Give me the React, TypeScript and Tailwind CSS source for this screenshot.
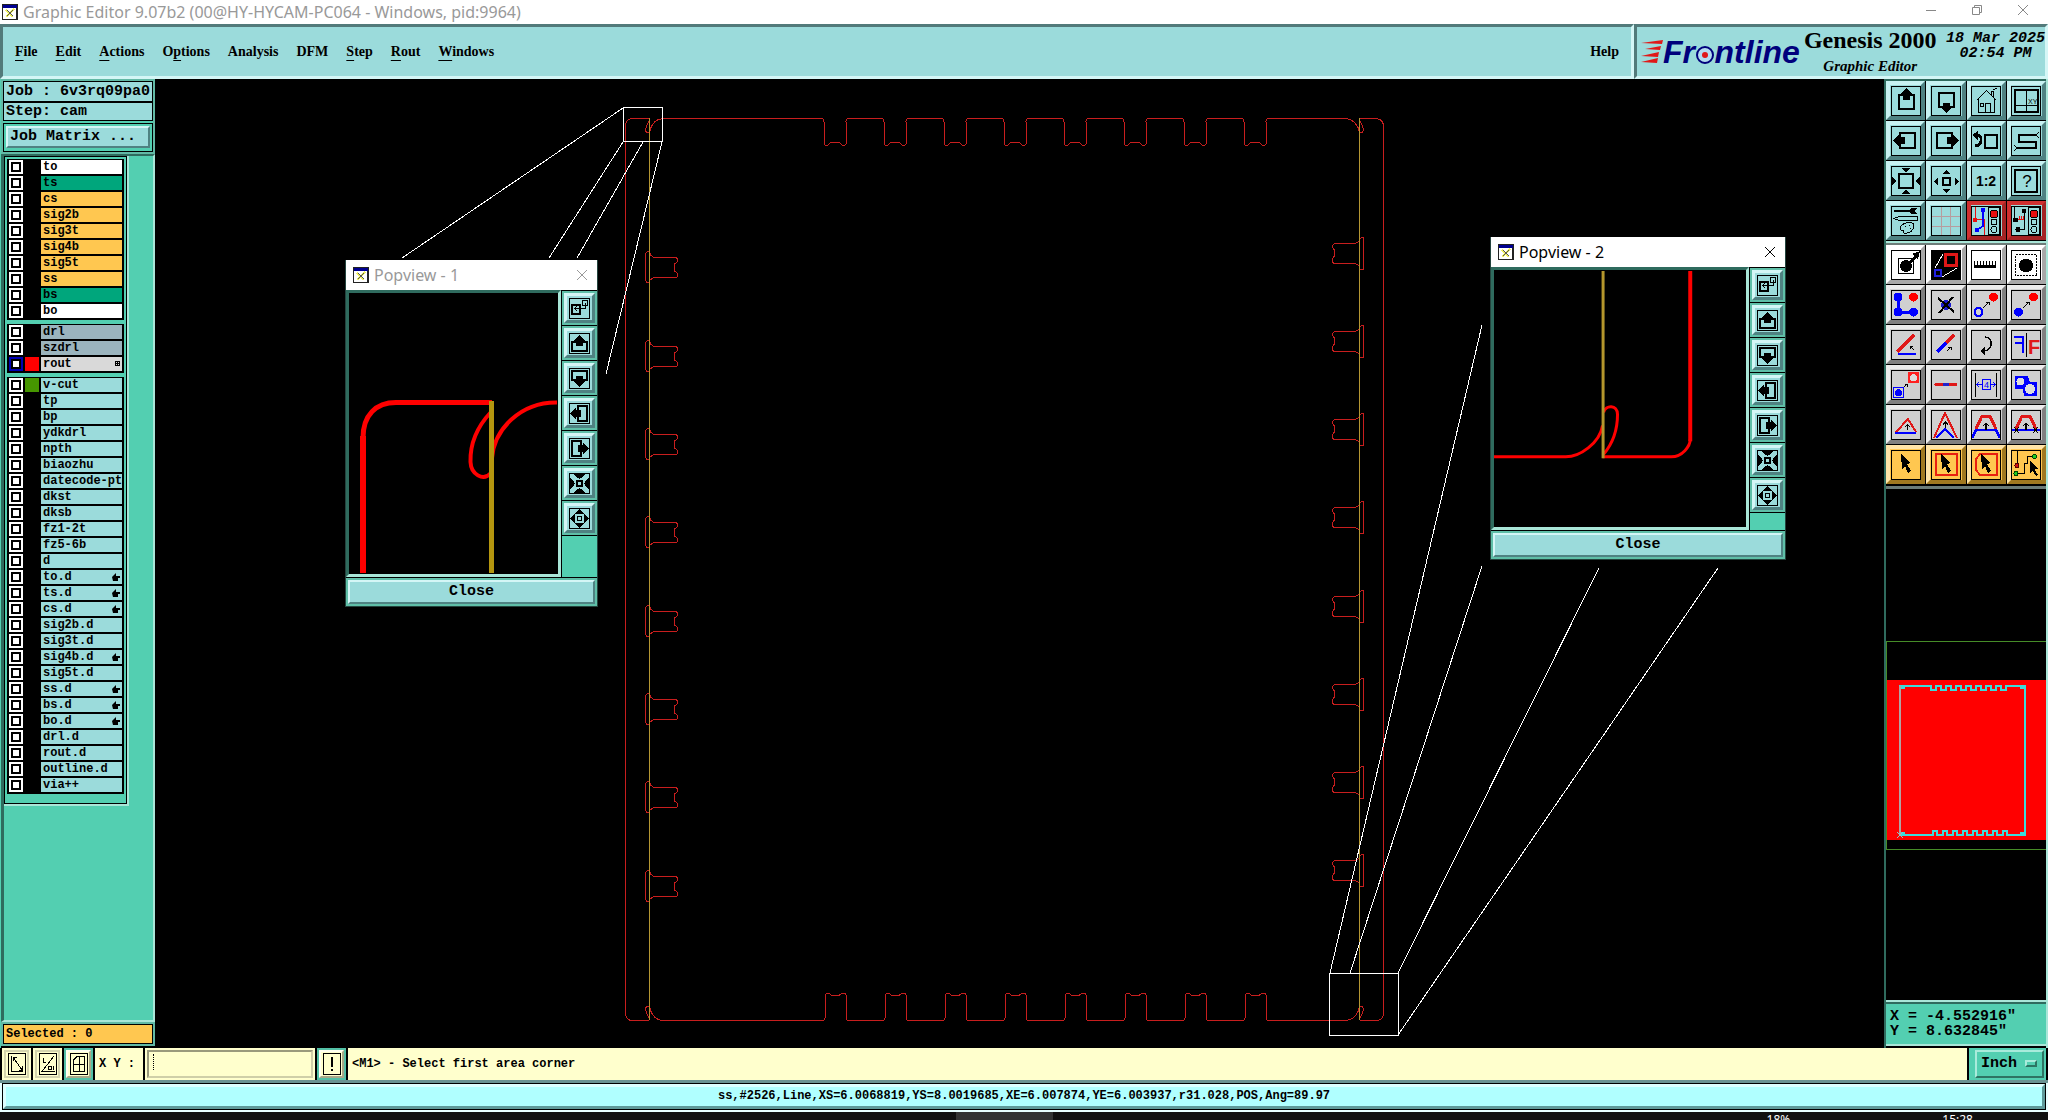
import type { ReactNode } from 'react'
import { clsx } from 'clsx'

const mono = "font-['Liberation_Mono',monospace] font-bold"
const serif = "font-['Liberation_Serif',serif] font-bold"
const raisedAqua = 'border-t-[#d4f6f6] border-l-[#d4f6f6] border-b-[#4f8282] border-r-[#4f8282]'
const sunkenAqua = 'border-t-[#527a7a] border-l-[#527a7a] border-b-[#d4f6f6] border-r-[#d4f6f6]'
const raisedTeal = 'border-t-[#a9ebdb] border-l-[#a9ebdb] border-b-[#2d7463] border-r-[#2d7463]'
const sunkenTeal = 'border-t-[#2f6b5e] border-l-[#2f6b5e] border-b-[#a9e6d8] border-r-[#a9e6d8]'

const menus = [
    { label: 'File', key: 0 },
    { label: 'Edit', key: 0 },
    { label: 'Actions', key: 0 },
    { label: 'Options', key: 1 },
    { label: 'Analysis', key: -1 },
    { label: 'DFM', key: -1 },
    { label: 'Step', key: 0 },
    { label: 'Rout', key: 0 },
    { label: 'Windows', key: 0 },
]

interface Layer {
    name: string
    bg: string
    swatch?: string
    active?: boolean
    hand?: boolean
}

const plain = (name: string, hand = false): Layer => ({ name, hand, bg: 'bg-[#9bdbdb]' })
const signal = (name: string): Layer => ({ name, bg: 'bg-[#ffc750]' })

const layerGroups: Layer[][] = [
    [
        { name: 'to', bg: 'bg-white' },
        { name: 'ts', bg: 'bg-[#00a67c]' },
        signal('cs'),
        signal('sig2b'),
        signal('sig3t'),
        signal('sig4b'),
        signal('sig5t'),
        signal('ss'),
        { name: 'bs', bg: 'bg-[#00a67c]' },
        { name: 'bo', bg: 'bg-white' },
    ],
    [
        { name: 'drl', bg: 'bg-[#9bb4be]' },
        { name: 'szdrl', bg: 'bg-[#9bb4be]' },
        { name: 'rout', bg: 'bg-[#d9d9d9]', swatch: 'bg-[#ff0000]', active: true },
    ],
    [
        { name: 'v-cut', bg: 'bg-[#9bdbdb]', swatch: 'bg-[#469600]' },
        plain('tp'),
        plain('bp'),
        plain('ydkdrl'),
        plain('npth'),
        plain('biaozhu'),
        plain('datecode-ptc'),
        plain('dkst'),
        plain('dksb'),
        plain('fz1-2t'),
        plain('fz5-6b'),
        plain('d'),
        plain('to.d', true),
        plain('ts.d', true),
        plain('cs.d', true),
        plain('sig2b.d'),
        plain('sig3t.d'),
        plain('sig4b.d', true),
        plain('sig5t.d'),
        plain('ss.d', true),
        plain('bs.d', true),
        plain('bo.d', true),
        plain('drl.d'),
        plain('rout.d'),
        plain('outline.d'),
        plain('via++'),
    ],
]

/* ---------- toolbar icons, on a 30x30 grid ---------- */

const cursor = <path d="M10 4 L20 13 L16 14 L20 21 L17 23 L14 16 L11 19 Z" fill="#000" />
const tinyUp = <path d="M15 20 V13 M12 16 L15 13 L18 16" fill="none" stroke="#000" strokeWidth="1.3" />
const trafficLight = (
    <>
        <rect x="17.500" y="1.500" width="11" height="27" fill="none" stroke="#000" />
        <circle cx="23" cy="8" r="4" fill="#e81010" stroke="#000" />
        <circle cx="23" cy="16" r="3" fill="none" stroke="#000" />
        <circle cx="23" cy="23.500" r="3" fill="none" stroke="#000" />
    </>
)

const icons: Record<string, ReactNode> = {
    up: (
        <>
            <rect x="8" y="9" width="15" height="14" fill="none" stroke="#000" strokeWidth="2" />
            <path d="M15.500 2 L21 8 H19 V14 H12 V8 H10 Z" />
        </>
    ),
    down: (
        <>
            <rect x="8" y="7" width="15" height="14" fill="none" stroke="#000" strokeWidth="2" />
            <path d="M12 17 H19 V22 H21 L15.500 27 L10 22 H12 Z" />
        </>
    ),
    home: (
        <path
            d="M5.500 14.500 L15.500 4.500 L25.500 14.500 M7.500 13 V26.500 H23.500 V13 M14.500 26 V17.500 H19.500 V26 M9.500 17.500 H12.500 V20.500 H9.500 Z M20.500 9 V5.500 H22.500 V11 M22 4 L26 2"
            fill="none" stroke="#000"
        />
    ),
    layout: (
        <>
            <path d="M4 4 H27 V26 H4 Z" fill="none" stroke="#000" strokeWidth="2" />
            <path d="M15.500 4 V26 M3 19.500 H27" stroke="#000" />
            <text x="17" y="18" fontSize="7" fontFamily="Liberation Sans">XY</text>
        </>
    ),
    left: (
        <>
            <rect x="9" y="7" width="15" height="15" fill="none" stroke="#000" strokeWidth="2" />
            <path d="M2 14.500 L8 9 V11 H14 V18 H8 V20 Z" />
        </>
    ),
    right: (
        <>
            <rect x="6" y="7" width="15" height="15" fill="none" stroke="#000" strokeWidth="2" />
            <path d="M28 14.500 L22 9 V11 H16 V18 H22 V20 Z" />
        </>
    ),
    undo: (
        <>
            <path d="M5 10 Q11 8 10 15 Q9 20 4 20" fill="none" stroke="#000" strokeWidth="3" />
            <path d="M1 9 L7 5 V14 Z" />
            <rect x="14" y="9" width="12" height="13" fill="none" stroke="#000" strokeWidth="2" />
        </>
    ),
    serp: (
        <>
            <path d="M25 9 H8 V16 H25 V22 H6" fill="none" stroke="#000" strokeWidth="2" />
            <path d="M28 6 L25 9 L28 12 M3 19 L6 22 L3 25" fill="none" stroke="#000" />
        </>
    ),
    zoomIn: (
        <>
            <rect x="8" y="8" width="14" height="14" fill="none" stroke="#000" strokeWidth="2" />
            <path d="M10 2 H20 L15 6 Z M10 28 H20 L15 24 Z M1 10 V20 L5 15 Z M29 10 V20 L25 15 Z" />
        </>
    ),
    zoomOut: (
        <>
            <rect x="12" y="12" width="7" height="7" fill="none" stroke="#000" strokeWidth="2" />
            <path d="M15.500 4 L20 8 H11 Z M15.500 27 L20 23 H11 Z M3 15.500 L7 11 V20 Z M28 15.500 L24 11 V20 Z" />
        </>
    ),
    ratio: <text x="15" y="20" textAnchor="middle" fontSize="14" fontWeight="700" fontFamily="Liberation Sans">1:2</text>,
    help: (
        <>
            <path d="M4 4 H26 V26 H4 Z" fill="none" stroke="#000" strokeWidth="2" />
            <text x="16" y="21" textAnchor="middle" fontSize="17" fontFamily="Liberation Sans">?</text>
        </>
    ),
    tools: (
        <>
            <path d="M3 4 H18 L21 2 H27 L23 5 L27 8 H21 L18 6 H3 Z" />
            <path d="M3 12.500 L8 10.500 H26 V14.500 H8 Z" fill="none" stroke="#000" />
            <path d="M10 24 Q8 19 15 17 Q23 15 23 20 Q22 26 16 27 Q10 28 13 24 Z" fill="none" stroke="#000" />
            <path d="M14 20 h1 M18 19 h1 M19 22 h1" stroke="#000" />
        </>
    ),
    grid: <path d="M10.500 1 V29 M19.500 1 V29 M1 10.500 H29 M1 20.500 H29" stroke="#b79c9e" />,
    netA: (
        <>
            <path d="M4.500 1 V13.500 H13.500 V29" fill="none" stroke="#e81010" />
            <path d="M12 4 V20 L6 24" fill="none" stroke="#00f" strokeWidth="1.500" />
            <circle cx="12" cy="4" r="2.500" fill="#00f" />
            <circle cx="6" cy="24" r="2.500" fill="#00f" />
            <circle cx="4" cy="14" r="2.500" fill="#e81010" />
            {trafficLight}
        </>
    ),
    netB: (
        <>
            <path d="M3.500 1 V14 M13.500 4 V23.500 H8" fill="none" stroke="#000" />
            <path d="M6 13.500 H13 M8.500 10 V14 M10.500 10 V14 M12.500 10 V14" stroke="#e81010" />
            <circle cx="13" cy="5" r="2.500" />
            <circle cx="4.500" cy="14" r="2.500" />
            <circle cx="7" cy="23.500" r="2.500" />
            {trafficLight}
        </>
    ),
    padMove: (
        <>
            <rect x="7.500" y="8.500" width="15" height="15" fill="none" stroke="#000" />
            <circle cx="15" cy="16" r="6" />
            <path d="M17 12 L23 6 L21 4 L29 1 L27 9 L25 8 L19 14 Z" />
        </>
    ),
    copyArea: (
        <>
            <rect width="30" height="30" fill="#000" />
            <rect x="14" y="4" width="11" height="11" fill="none" stroke="#e01818" strokeWidth="3" />
            <rect x="4" y="20" width="6" height="6" fill="none" stroke="#2222e0" strokeWidth="2" />
            <path d="M12 4 L4 18 M26 18 L11 27" stroke="#fff" />
        </>
    ),
    ruler: <path d="M3 11 h1 v4 h2 v-4 h1 v4 h2 v-4 h1 v4 h2 v-4 h1 v4 h2 v-4 h1 v4 h2 v-4 h1 v4 h2 v-4 h1 v4 h2 v-4 h1 v7 H3 Z" />,
    selectPad: (
        <>
            <rect x="4.500" y="4.500" width="21" height="21" fill="none" stroke="#000" strokeDasharray="2 1" />
            <circle cx="15" cy="15.500" r="7" />
        </>
    ),
    chain: (
        <>
            <path d="M7 7 V22 H23" fill="none" stroke="#00f" strokeWidth="3" />
            <g fill="#00f">
                <circle cx="7" cy="7" r="4.500" />
                <circle cx="7" cy="22" r="4.500" />
                <circle cx="22.500" cy="22" r="4.500" />
            </g>
            <circle cx="22.500" cy="7" r="4.500" fill="#f00" />
        </>
    ),
    remove: (
        <>
            <circle cx="15" cy="15" r="5" fill="#1a1ad0" />
            <path d="M7 8 L23 22 M22 7 L8 23" stroke="#000" strokeWidth="2" />
        </>
    ),
    copyPad: (
        <>
            <circle cx="22.500" cy="7" r="4.500" fill="#f00" />
            <circle cx="7.500" cy="22" r="4" fill="none" stroke="#00f" strokeWidth="2" />
            <path d="M12 18 L18 12 M15 12 H18 V15" fill="none" stroke="#000" />
        </>
    ),
    movePad: (
        <>
            <circle cx="22.500" cy="7" r="4.500" fill="#f00" />
            <circle cx="7.500" cy="22" r="4.500" fill="#00f" />
            <path d="M12 18 L18 12 M15 12 H18 V15" fill="none" stroke="#000" />
        </>
    ),
    rotate: (
        <>
            <path d="M6 22 L23 5" stroke="#e01818" strokeWidth="3" />
            <path d="M7 24 H25" stroke="#00f" strokeWidth="2" />
            <path d="M23 20 L19 16 M19 19 V16 H22" fill="none" stroke="#000" />
        </>
    ),
    extend: (
        <>
            <path d="M15 13 L23 5" stroke="#e01818" strokeWidth="3" />
            <path d="M6 22 L15 13" stroke="#00f" strokeWidth="3" />
            <path d="M16 21 L20 17 M17 17 H20 V20" fill="none" stroke="#000" />
        </>
    ),
    turn: (
        <>
            <path d="M14 7 Q21 8 20 15 Q19 21 12 21" fill="none" stroke="#000" strokeWidth="1.500" />
            <path d="M9 21 L14 17 V25 Z" />
        </>
    ),
    mirror: (
        <>
            <path d="M15.500 3 V27" stroke="#000" />
            <path d="M3 7 H12 V23 M4 13 H12" fill="none" stroke="#00f" strokeWidth="2" />
            <text x="17" y="24" fontSize="20" fontWeight="700" fontFamily="Liberation Sans" fill="#e01818">F</text>
        </>
    ),
    swap: (
        <>
            <rect x="17" y="2" width="11" height="11" fill="#f22" />
            <circle cx="22.500" cy="7.500" r="3.500" fill="#ddd" />
            <rect x="2.500" y="17.500" width="10" height="10" fill="none" stroke="#00f" />
            <circle cx="7.500" cy="22.500" r="3.500" fill="#00f" />
            <path d="M13 17 L16 14 M13.500 14.500 H16 V17" fill="none" stroke="#000" />
        </>
    ),
    bridge: (
        <>
            <path d="M5 14.500 H25" stroke="#e01818" strokeWidth="3" strokeLinecap="round" />
            <path d="M12 14.500 H18" stroke="#22c" strokeWidth="3" />
        </>
    ),
    spacing: (
        <>
            <path d="M4.500 3 V27 M25.500 3 V27" stroke="#000" />
            <rect x="11.500" y="9.500" width="8" height="10" fill="none" stroke="#00f" />
            <path d="M11 14.500 H6 M8 12 L5.500 14.500 L8 17 M20 14.500 H24 M22 12 L24.500 14.500 L22 17" fill="none" stroke="#00f" />
            <text x="15.500" y="18" textAnchor="middle" fontSize="9" fontFamily="Liberation Sans" fill="#00f">4</text>
        </>
    ),
    merge: (
        <>
            <path d="M4 6 H17 L19 12 H26 V26 H13 L12 19 H4 Z" fill="#00f" />
            <circle cx="9.500" cy="11.500" r="4" fill="#ddd" />
            <circle cx="19" cy="19" r="5" fill="#ddd" />
        </>
    ),
    triangle: (
        <>
            <path d="M5 22 L17 9 L25 22" fill="none" stroke="#e01818" strokeWidth="2" />
            <path d="M4 23 H25" stroke="#00f" strokeWidth="2" />
            <path d="M16.500 20 V15 M14 17 L16.500 14.500 L19 17" fill="none" stroke="#000" />
        </>
    ),
    peak: (
        <>
            <path d="M3 28 L14 3 L26 28" fill="none" stroke="#e01818" strokeWidth="2" />
            <path d="M5 28 L14 19 L23 28" fill="none" stroke="#00f" strokeWidth="2" />
            <path d="M14.500 18 V12 M12 14.500 L14.500 12 L17 14.500" fill="none" stroke="#000" />
        </>
    ),
    trapezoid: (
        <>
            <path d="M5 19 L11 6 H19 L25 19" fill="none" stroke="#e01818" strokeWidth="3" />
            <path d="M1 28 L5 20 H25 L29 28" fill="none" stroke="#00f" strokeWidth="2.500" />
            {tinyUp}
        </>
    ),
    trapezoidCut: (
        <>
            <path d="M5 19 L11 6 H19 L25 19" fill="none" stroke="#e01818" strokeWidth="3" />
            <path d="M1 20 H29" stroke="#00f" strokeWidth="2" />
            <path d="M3 17 L8 23 M8 17 L3 23 M22 17 L27 23 M27 17 L22 23" stroke="#000" />
            {tinyUp}
        </>
    ),
    pick: cursor,
    pickRect: (
        <>
            <rect x="5" y="4" width="21" height="21" fill="none" stroke="#e82010" strokeWidth="2" />
            {cursor}
        </>
    ),
    pickPoly: (
        <>
            <path d="M9 4 H26 V25 H9 L5 20 V9 Z" fill="none" stroke="#e82010" strokeWidth="2" />
            {cursor}
        </>
    ),
    pickNet: (
        <>
            <path d="M6.500 1 V15 M7 23.500 H13.500 V13.500 H16.500 V6.500 H22" fill="none" stroke="#000" />
            <circle cx="6" cy="15.500" r="2" fill="#d01010" stroke="#500" />
            <circle cx="23.500" cy="6.500" r="2" fill="#2c2" stroke="#040" />
            <circle cx="5" cy="23.500" r="2" fill="#2c2" stroke="#040" />
            <path d="M19 11 L27 19 L23.500 19.500 L27 25 L25 26 L22 21 L19 23 Z" />
        </>
    ),
}

function Icon({ name }: { name: string }) {
    return (
        <svg viewBox="1 1 28 28" className="block size-7" shapeRendering="crispEdges" aria-hidden="true">
            {icons[name]}
        </svg>
    )
}

/* smaller set for the popview side bar, on a 21x21 grid */
const popIcons: Record<string, ReactNode> = {
    link: (
        <>
            <rect x="3" y="7" width="8" height="9" fill="none" stroke="#000" strokeWidth="2" />
            <rect x="13.500" y="2.500" width="5" height="5" fill="none" stroke="#000" />
            <path d="M16.500 5 V10.500 H5 M8 8 L5.500 10.500 L8 13" fill="none" stroke="#000" />
        </>
    ),
    up: (
        <>
            <rect x="3" y="9" width="15" height="9" fill="none" stroke="#000" strokeWidth="2" />
            <path d="M10.500 2 L16 8 H14 V13 H7 V8 H5 Z" />
        </>
    ),
    down: (
        <>
            <rect x="3" y="3" width="15" height="9" fill="none" stroke="#000" strokeWidth="2" />
            <path d="M10.500 19 L16 13 H14 V8 H7 V13 H5 Z" />
        </>
    ),
    left: (
        <>
            <rect x="9" y="3" width="9" height="15" fill="none" stroke="#000" strokeWidth="2" />
            <path d="M1 10.500 L7 5 V7 H12 V14 H7 V16 Z" />
        </>
    ),
    right: (
        <>
            <rect x="3" y="3" width="9" height="15" fill="none" stroke="#000" strokeWidth="2" />
            <path d="M20 10.500 L14 5 V7 H9 V14 H14 V16 Z" />
        </>
    ),
    shrink: (
        <>
            <rect x="8" y="8" width="5" height="5" fill="none" stroke="#000" strokeWidth="2" />
            <path d="M5 0 H16 V2 L10.500 6 L5 2 Z M5 21 H16 V19 L10.500 15 L5 19 Z M0 5 V16 H2 L6 10.500 L2 5 Z M21 5 V16 H19 L15 10.500 L19 5 Z" />
        </>
    ),
    grow: (
        <>
            <rect x="8.500" y="8.500" width="4" height="4" fill="none" stroke="#000" />
            <path d="M10.500 1 L15 6 H6 Z M10.500 20 L15 15 H6 Z M1 10.500 L6 6 V15 Z M20 10.500 L15 6 V15 Z" />
        </>
    ),
}

const viewTools = [
    'up', 'down', 'home', 'layout',
    'left', 'right', 'undo', 'serp',
    'zoomIn', 'zoomOut', 'ratio', 'help',
    'tools', 'grid', 'netA', 'netB',
]

const editTools = [
    'padMove', 'copyArea', 'ruler', 'selectPad',
    'chain', 'remove', 'copyPad', 'movePad',
    'rotate', 'extend', 'turn', 'mirror',
    'swap', 'bridge', 'spacing', 'merge',
    'triangle', 'peak', 'trapezoid', 'trapezoidCut',
    'pick', 'pickRect', 'pickPoly', 'pickNet',
]

const tones = {
    aqua: 'bg-[#9bdbdb] border-t-[#c8f2f2] border-l-[#c8f2f2] border-b-[#4f8282] border-r-[#4f8282]',
    red: 'bg-[#9bdbdb] border-t-[#d03030] border-l-[#d03030] border-b-[#a42424] border-r-[#a42424]',
    white: 'bg-white border-t-white border-l-white border-b-[#a8a8a8] border-r-[#a8a8a8]',
    gray: 'bg-[#d0d0d0] border-t-[#ececec] border-l-[#ececec] border-b-[#808080] border-r-[#808080]',
    orange: 'bg-[#ffc750] border-t-[#ffe4a8] border-l-[#ffe4a8] border-b-[#a07820] border-r-[#a07820]',
}

function ToolButton({ name, tone }: { name: string; tone: keyof typeof tones }) {
    return (
        <button type="button" aria-label={name} className={clsx('flex h-[39px] items-center justify-center border-4', tones[tone])}>
            <span className="border border-black">
                <Icon name={name} />
            </span>
        </button>
    )
}

function AppIcon() {
    return (
        <svg viewBox="0 0 16 16" className="size-4 shrink-0" shapeRendering="crispEdges" aria-hidden="true">
            <rect width="16" height="16" fill="#222" />
            <rect x="1" y="1" width="14" height="3" fill="#000090" />
            <rect x="1" y="4" width="13" height="11" fill="#fff" />
            <path d="M4 6 L11 13 M12 5 L4 13" stroke="#f0f060" strokeWidth="2" />
            <path d="M5 6 L11 12 M11 6 L5 12" stroke="#555" />
        </svg>
    )
}

function TitleBar() {
    return (
        <header className="flex h-6 shrink-0 items-center gap-[5px] bg-white pl-[2px] font-['Noto_Sans',sans-serif] text-base text-[#999]">
            <AppIcon />
            <h1 className="leading-5 whitespace-nowrap">Graphic Editor 9.07b2 (00@HY-HYCAM-PC064 - Windows, pid:9964)</h1>
            <div className="ml-auto flex gap-9 pr-5 pb-1">
                <button type="button" aria-label="Minimize">
                    <svg viewBox="0 0 10 10" className="size-[10px]"><path d="M0 5.500 H10" stroke="#888" /></svg>
                </button>
                <button type="button" aria-label="Restore">
                    <svg viewBox="0 0 10 10" className="size-[10px]">
                        <path d="M0.500 2.500 H7.500 V9.500 H0.500 Z M2.500 2 V0.500 H9.500 V7.500 H8" fill="none" stroke="#888" />
                    </svg>
                </button>
                <button type="button" aria-label="Close window">
                    <svg viewBox="0 0 10 10" className="size-[10px]"><path d="M0 0 L10 10 M10 0 L0 10" stroke="#888" /></svg>
                </button>
            </div>
        </header>
    )
}

function MenuLabel({ label, hotkey }: { label: string; hotkey: number }) {
    if (hotkey < 0) return <>{label}</>
    return (
        <>
            {label.slice(0, hotkey)}
            <span className="underline underline-offset-4">{label[hotkey]}</span>
            {label.slice(hotkey + 1)}
        </>
    )
}

function Logo() {
    return (
        <div className="flex items-center">
            <svg viewBox="0 0 22 24" className="h-6 w-[22px]" aria-hidden="true">
                <path d="M0 3 L22 0 L21 4 Z M4 9 L20 6 L19 10 Z M0 16 L18 12 L17 17 Z M0 22 L17 18 L16 23 Z" fill="#e01818" />
            </svg>
            <span className="font-['Liberation_Sans',sans-serif] text-[32px] leading-8 font-bold text-[#00007c] italic">
                Fr
                <span className="relative text-transparent">
                    o
                    <svg viewBox="0 0 18 18" className="absolute bottom-[6px] left-px size-[18px]" aria-hidden="true">
                        <circle cx="9" cy="9" r="8" fill="#b4dcf0" stroke="#00007c" strokeWidth="2" />
                        <circle cx="9" cy="9" r="3" fill="#e01818" />
                    </svg>
                </span>
                ntline
            </span>
        </div>
    )
}

function MenuBar() {
    return (
        <div className="flex h-[55px] shrink-0 bg-[#9bdbdb]">
            <nav className={clsx('flex flex-1 items-center gap-[18px] border-3 px-3 text-sm', sunkenAqua, serif)}>
                {menus.map((m) => (
                    <button key={m.label} type="button">
                        <MenuLabel label={m.label} hotkey={m.key} />
                    </button>
                ))}
                <button type="button" className="ml-auto">Help</button>
            </nav>
            <div className={clsx('flex w-[414px] gap-1 border-3 pl-1', sunkenAqua)}>
                <Logo />
                <div className={clsx('text-center whitespace-nowrap', serif)}>
                    <div className="text-[24px] leading-[26px]">Genesis 2000</div>
                    <div className="text-[15px] leading-[26px] italic">Graphic Editor</div>
                </div>
                <div className={clsx('ml-auto pt-1 text-center text-[15px] leading-[15px] whitespace-nowrap italic', mono)}>
                    <div>18 Mar 2025</div>
                    <div>02:54 PM</div>
                </div>
            </div>
        </div>
    )
}

function LayerRow({ layer }: { layer: Layer }) {
    return (
        <label className="flex h-4 items-center gap-[2px]">
            <span className={clsx('flex size-[14px] shrink-0 items-center justify-center', layer.active ? 'bg-[#0000b4]' : 'bg-white')}>
                <input
                    type="checkbox"
                    defaultChecked={layer.active}
                    className="size-[10px] appearance-none border-2 border-black bg-white"
                />
            </span>
            <span className={clsx('size-[14px] shrink-0', layer.swatch)} />
            <span className={clsx('flex h-[14px] w-[82px] items-center overflow-hidden pl-[2px] text-[12px] leading-[14px] whitespace-nowrap', layer.bg)}>
                {layer.name}
                {layer.hand && (
                    <svg viewBox="0 0 8 8" className="mr-[2px] ml-auto size-2" aria-hidden="true">
                        <path d="M0 4 L4 0 V3 H8 V5 H6 V8 H1 Z" />
                    </svg>
                )}
                {layer.active && (
                    <svg viewBox="0 0 5 5" className="mr-[2px] ml-auto size-[5px]" shapeRendering="crispEdges" aria-hidden="true">
                        <path d="M0.500 0.500 H4.500 V4.500 H0.500 Z M2.500 0 V5 M0 2.500 H5" fill="none" stroke="#000" />
                    </svg>
                )}
            </span>
        </label>
    )
}

function LayerPanel() {
    return (
        <aside className={clsx('flex w-[155px] shrink-0 flex-col bg-[#53cfb1] pl-px', mono)}>
            <div className="border-2 border-[#62b9a5] text-[15px]">
                <div className="border border-black bg-[#9bdbdb] px-[2px] pt-px leading-[18px] whitespace-nowrap">Job : 6v3rq09pa0</div>
                <div className="border border-black bg-[#9bdbdb] px-[2px] leading-[17px]">Step: cam</div>
                <div className="mt-[2px] border border-black p-[2px]">
                    <button type="button" className={clsx('h-[22px] w-full border-2 bg-[#9bdbdb] pl-[2px] text-left leading-[18px]', raisedAqua)}>
                        Job Matrix ...
                    </button>
                </div>
            </div>
            <div className={clsx('flex-1 border-2 border-l-3', sunkenTeal)}>
                <div className="w-[125px] border-r-2 border-b-2 border-[#a9e6d8]">
                    <div className="flex flex-col gap-1 border border-black px-[2px] pt-[2px] pb-[9px]">
                        {layerGroups.map((group, i) => (
                            <div key={i} className="bg-black px-[2px] pb-px">
                                {group.map((layer) => (
                                    <LayerRow key={layer.name} layer={layer} />
                                ))}
                            </div>
                        ))}
                    </div>
                </div>
            </div>
            <div className="border-2 border-[#62b9a5]">
                <div className="border border-black bg-[#ffc750] pl-[2px] text-[12px] leading-[18px]">Selected : 0</div>
            </div>
            <div className="h-[2px] bg-black" />
        </aside>
    )
}

/* ---------- board drawing ---------- */

const notchXs = [825, 885, 945, 1005, 1065, 1125, 1185, 1245]
const leftTabs = [267, 356, 444, 532, 621, 709, 797, 886]
const rightTabs = [253, 341, 429, 517, 606, 694, 782, 870]

const topEdge = notchXs
    .map((x) => `H${x - 3} q2 0 2 3 V144 q2 3 5 0 q1 -2 4 -2 h4 q3 0 4 2 q3 3 5 0 V121.500 q0 -3 3 -3`)
    .join(' ')

const bottomEdge = notchXs
    .map((x) => `H${x - 3} q3 0 3 -3 V995 q2 -3 5 -1 q2 2 4 1 h3 q2 1 4 -1 q4 -2 5 1 V1017.500 q0 3 3 3`)
    .join(' ')

function Board() {
    return (
        <svg viewBox="155 79 1729 969" className="absolute inset-0 size-full" preserveAspectRatio="xMinYMin meet" shapeRendering="crispEdges" aria-hidden="true">
            <g fill="none" stroke="#c81e1e" strokeWidth="1">
                <path d="M649.500 118.500 H632 Q625.500 119 625.500 127 V1012 Q625.500 1020.500 632 1020.500 H649" />
                <path d="M1360 118.500 H1376 Q1383.500 119 1383.500 127 V1012 Q1383.500 1020.500 1376 1020.500 H1360" />
                <path d="M650 131 Q653 119 663 118.500" />
                <path d={`M663 118.500 ${topEdge} H1345 Q1356 119 1359 131`} />
                <path d={`M650 1008 Q653 1020 663 1020.500 ${bottomEdge} H1345 Q1356 1020 1359 1008`} />
                <path d="M649 121 Q643 132 648 133 Q651 132 650 127" />
                <path d="M649 1018 Q643 1007 648 1006 Q651 1007 650 1012" />
                <path d="M1360 121 Q1366 132 1361 133 Q1358 132 1359 127" />
                <path d="M1360 1018 Q1366 1007 1361 1006 Q1358 1007 1359 1012" />
                {leftTabs.map((y) => (
                    <g key={y} transform={`translate(0 ${y})`}>
                        <path d="M650.500 -12 Q650 -16 647.500 -16 Q645.500 -14 645.500 -11 V12 Q646 16 648 16 Q650 15 650.500 12" />
                        <path d="M650.500 -12 Q653 -9.500 655 -9.500 H676 Q679 -7 677 -5 L674.500 -3 V4 L677 6 Q679 9 676 10.500 H656 Q652 10.500 650.500 13" />
                    </g>
                ))}
                {rightTabs.map((y) => (
                    <g key={y} transform={`translate(0 ${y})`}>
                        <path d="M1359 -12 Q1360 -16 1363.500 -15.500 V16.500 H1360 Q1359 15 1359 13" />
                        <path d="M1359 -12 Q1357 -9.500 1354 -9.500 H1335 Q1331 -8 1333 -5 L1334.500 -3 V3 L1333 5 Q1331 9 1334 10.500 H1353 Q1357 10.500 1359 13" />
                    </g>
                ))}
            </g>
            <path d="M649.500 118 V1020 M1359.500 118 V1020" stroke="#b49632" />
            <g fill="none" stroke="#fff" strokeWidth="1">
                <rect x="623.500" y="107.500" width="39" height="34" />
                <path d="M623 108 L402 258 M623 142 L549 258 M643 142 L577 258 M662 142 L606 374" />
                <rect x="1329.500" y="973.500" width="69" height="62" />
                <path d="M1330 973 L1482 325 M1350 973 L1482 566 M1398 973 L1599 568 M1398 1035 L1718 568" />
            </g>
        </svg>
    )
}

const popTools = ['link', 'up', 'down', 'left', 'right', 'shrink', 'grow']

interface PopviewProps {
    title: string
    className: string
    titleColor: string
    children: ReactNode
}

function Popview({ title, className, titleColor, children }: PopviewProps) {
    return (
        <section className={clsx('absolute flex flex-col border border-t-0 border-[#24443e] bg-black', className)}>
            <div className={clsx("flex h-[30px] shrink-0 items-center gap-[5px] bg-white pr-[10px] pl-[7px] font-['Noto_Sans',sans-serif] text-base", titleColor)}>
                <AppIcon />
                <h2 className="leading-5">{title}</h2>
                <button type="button" aria-label={`Close ${title}`} className="ml-auto">
                    <svg viewBox="0 0 10 10" className="size-[10px]"><path d="M0 0 L10 10 M10 0 L0 10" stroke="currentColor" /></svg>
                </button>
            </div>
            <div className="flex min-h-0 flex-1">
                <div className={clsx('min-w-0 flex-1 border-3', sunkenTeal)}>{children}</div>
                <div className="flex w-[36px] flex-col gap-px pt-px pl-px">
                    {popTools.map((name) => (
                        <button
                            key={name}
                            type="button"
                            aria-label={name}
                            className="h-[34px] shrink-0 border-2 border-[#5fbfa8] bg-[#9bdbdb]"
                        >
                            <span className={clsx('flex h-full items-center justify-center border-3', raisedAqua)}>
                                <span className="border border-black">
                                    <svg viewBox="1 1 19 19" className="block size-[19px]" shapeRendering="crispEdges" aria-hidden="true">
                                        {popIcons[name]}
                                    </svg>
                                </span>
                            </span>
                        </button>
                    ))}
                    <div className="flex-1 bg-[#53cfb1]" />
                </div>
            </div>
            <button type="button" className="mt-px h-7 shrink-0 border-2 border-[#5fbfa8] bg-[#9bdbdb]">
                <span className={clsx('block border-2 text-[15px] leading-5', raisedAqua, mono)}>Close</span>
            </button>
        </section>
    )
}

function Canvas() {
    return (
        <main className="relative flex-1 overflow-hidden bg-black">
            <Board />
            <Popview title="Popview - 1" className="top-[181px] left-[190px] h-[347px] w-[253px]" titleColor="text-[#999]">
                <svg viewBox="349 293 209 280" className="block size-full" preserveAspectRatio="xMinYMin meet" aria-hidden="true">
                    <g fill="none" stroke="#f00">
                        <path d="M363 573 V436" strokeWidth="6" />
                        <path d="M363 438 C363 415 376 402.500 396 402.500 H492" strokeWidth="5" />
                        <path d="M491 412 C476 428 470 446 470.500 462 C471 474 483 482 491 473" strokeWidth="4" />
                        <path d="M492 458 C494 430 520 402 557 402.500" strokeWidth="4" />
                    </g>
                    <path d="M491.500 401 V573" stroke="#b4960f" strokeWidth="5" />
                </svg>
            </Popview>
            <Popview title="Popview - 2" className="top-[158px] left-[1335px] h-[323px] w-[296px]" titleColor="text-black">
                <svg viewBox="1494 270 252 258" className="block size-full" preserveAspectRatio="xMinYMin meet" aria-hidden="true">
                    <g fill="none" stroke="#f00" strokeWidth="3">
                        <path d="M1494 457.500 H1566 C1580 457.500 1600 444 1603 426" />
                        <path d="M1604 455 C1614 443 1618 430 1618 415 C1618 405 1606 405 1604 413" />
                        <path d="M1603 457.500 H1672 C1683 457.500 1691 447 1691 440" />
                        <path d="M1691 442 V271" strokeWidth="4" />
                    </g>
                    <path d="M1603.500 271 V459" stroke="#b4962c" strokeWidth="3" />
                </svg>
            </Popview>
        </main>
    )
}

function MiniMap() {
    return (
        <svg viewBox="1886 489 160 511" className="block w-full flex-1 bg-black" preserveAspectRatio="xMidYMin meet" shapeRendering="crispEdges" aria-hidden="true">
            <rect x="1886" y="680" width="160" height="160" fill="#f00" />
            <path d="M2047 641.500 H1886.500 V849.500 H2047" fill="none" stroke="#468c28" />
            <g fill="none" stroke="#3cdcdc" strokeWidth="2">
                <path d="M1899 686 H1931 v4 h5 v-4 h5 v4 h5 v-4 h5 v4 h5 v-4 h5 v4 h5 v-4 h5 v4 h5 v-4 h5 v4 h5 v-4 h5 v4 h5 v-4 h5 v4 h5 v-4 H2025 V835 H2007 v-4 h-4 v4 h-6 v-4 h-4 v4 h-6 v-4 h-4 v4 h-6 v-4 h-4 v4 h-6 v-4 h-4 v4 h-6 v-4 h-4 v4 h-6 v-4 h-4 v4 h-6 v-4 h-4 v4 H1899" />
                <path d="M1900 686 V835" stroke="#b4a0a0" />
                <path d="M1901 688 h4 M2020 688 h4 M1901 833 h4 M2020 833 h4" />
            </g>
            <path d="M1897 832 L1903 838 M1903 832 L1897 838" stroke="#8cc8c8" />
        </svg>
    )
}

function ToolPanel() {
    return (
        <aside className="flex w-[164px] shrink-0 flex-col border-r-2 border-l-2 border-r-[#a9e6d8] border-l-[#2f6b5e] bg-black">
            <div className="grid grid-cols-4 gap-px border-t-2 border-b-2 border-t-[#2f6b5e] border-b-[#a9e6d8] pb-px">
                {viewTools.map((name) => (
                    <ToolButton key={name} name={name} tone={name.startsWith('net') ? 'red' : 'aqua'} />
                ))}
            </div>
            <div className="grid grid-cols-4 gap-px border-t-2 border-b-3 border-[#6c7c78] pb-[2px]">
                {editTools.map((name, i) => (
                    <ToolButton key={name} name={name} tone={i < 4 ? 'white' : i < 20 ? 'gray' : 'orange'} />
                ))}
            </div>
            <MiniMap />
            <div className={clsx('mb-[2px] border-t-2 border-t-[#a9e6d8] bg-[#53cfb1]', mono)}>
                <div className="border-t-2 border-b-2 border-t-[#2f6b5e] border-b-[#a9e6d8] py-[5px] pl-1 text-[15px] leading-[15px]">
                    <div>X = -4.552916"</div>
                    <div>Y = 8.632845"</div>
                </div>
            </div>
        </aside>
    )
}

const creamBevel = 'border-t-[#fffff0] border-l-[#fffff0] border-b-[#a8a888] border-r-[#a8a888]'

function SnapButton({ label, teal, children }: { label: string; teal?: boolean; children: ReactNode }) {
    return (
        <button
            type="button"
            aria-label={label}
            className={clsx('flex w-[29px] items-center justify-center border-2 bg-[#ffffcd]', teal ? 'border-[#53c0a6]' : 'border-[#ffffcd]')}
        >
            <span className={clsx('flex size-full items-center justify-center border-2', teal ? creamBevel : 'border-[#d4d4ae]')}>
                <svg viewBox="0 0 18 22" className="h-[22px] w-[18px]" shapeRendering="crispEdges" aria-hidden="true">
                    <rect x="0.500" y="0.500" width="17" height="21" fill="none" stroke="#000" />
                    {children}
                </svg>
            </span>
        </button>
    )
}

function PromptBar() {
    return (
        <div className={clsx('flex h-[32px] shrink-0 gap-[2px] bg-black pl-[2px] text-[12px]', mono)}>
            <SnapButton label="Snap to edge">
                <path d="M3.500 3 V18.500 H15 M5 4 L14 17 M5.500 8 V4.500 H9 M14.500 13 V17 H11" fill="none" stroke="#000" />
            </SnapButton>
            <SnapButton label="Snap angle">
                <path d="M15 3 L3 18.500 H16 M4.500 5 V9.500 H7 M9.500 13.500 H12.500 V16.500 H9.500 Z M14.500 13 V17" fill="none" stroke="#000" />
            </SnapButton>
            <SnapButton label="Grid" teal>
                <path d="M3.500 7 L7 3.500 H14.500 V18.500 H3.500 Z M9.500 3 V19 M3 11.500 H15" fill="none" stroke="#000" />
            </SnapButton>
            <label htmlFor="xy" className="flex w-[48px] items-center bg-[#ffffcd] pl-1 whitespace-nowrap">X Y :</label>
            <div className="relative w-[170px] bg-[#ffffcd] p-[2px]">
                <input
                    id="xy"
                    type="text"
                    className="size-full border-2 border-t-[#9a9a7c] border-r-[#cfcfa8] border-b-[#cfcfa8] border-l-[#9a9a7c] bg-[#ffffcd] px-1 outline-none"
                />
                <span className="absolute top-[6px] left-2 h-4 border-l border-dotted border-black" />
            </div>
            <SnapButton label="Confirm" teal>
                <path d="M9 4 V14 M9 16 V18" stroke="#000" strokeWidth="2" />
            </SnapButton>
            <output className="flex flex-1 items-center bg-[#ffffcd] pl-1 whitespace-nowrap">&lt;M1&gt; - Select first area corner</output>
            <div className="relative mr-[2px] w-[77px] bg-[#53cfb1] py-[2px] pr-[2px] pl-[6px]">
                <select
                    aria-label="Units"
                    className={clsx('size-full appearance-none border-2 bg-[#53cfb1] pl-1 text-[15px] leading-5', raisedTeal)}
                >
                    <option>Inch</option>
                    <option>mm</option>
                </select>
                <span className={clsx('pointer-events-none absolute top-[12px] right-[9px] h-[7px] w-3 border-2 bg-[#53cfb1]', raisedTeal)} />
            </div>
        </div>
    )
}

function StatusBar() {
    return (
        <div className={clsx('shrink-0 border-t-3 border-b-2 border-t-[#6a9292] border-b-[#e8ffff] bg-[#e8ffff] px-[2px] text-[12px]', mono)}>
            <div className="border border-black">
                <div className="border-3 border-t-[#dcffff] border-r-[#5f9a9a] border-b-[#5f9a9a] border-l-[#dcffff] bg-[#b0ffff] text-center leading-[19px]">
                    ss,#2526,Line,XS=6.0068819,YS=8.0019685,XE=6.007874,YE=6.003937,r31.028,POS,Ang=89.97
                </div>
            </div>
        </div>
    )
}

function Taskbar() {
    return (
        <footer className="relative flex h-2 shrink-0 justify-end gap-[152px] overflow-hidden bg-[#111] pr-[75px] font-['Noto_Sans',sans-serif] text-[12px] leading-4 text-white">
            <span className="absolute top-0 left-[956px] h-2 w-[97px] bg-[#333]" />
            <span>18%</span>
            <span>15:28</span>
        </footer>
    )
}

export default function App() {
    return (
        <div className="flex h-screen flex-col overflow-hidden bg-black text-black">
            <TitleBar />
            <MenuBar />
            <div className="flex min-h-0 flex-1">
                <LayerPanel />
                <Canvas />
                <ToolPanel />
            </div>
            <PromptBar />
            <StatusBar />
            <Taskbar />
        </div>
    )
}
